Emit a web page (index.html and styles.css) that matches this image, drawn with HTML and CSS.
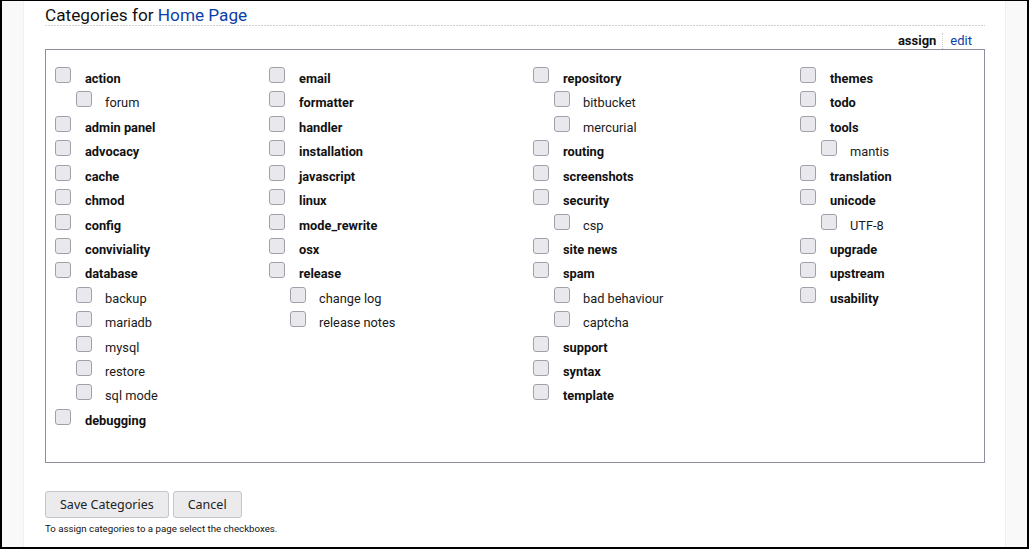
FILE: index.html
```html
<!DOCTYPE html>
<html>
<head>
<meta charset="utf-8">
<link rel="stylesheet" href="styles.css">
</head>
<body>
<div class="frame">
  <div class="side side-left"></div>
  <main class="main">
    <h1 class="title">Categories for <a href="#">Home Page</a></h1>
    <div class="tabs"><span class="tab-active">assign</span><a class="tab-link" href="#">edit</a></div>
    <div class="box">
      <div class="col">
        <div class="row top"><input type="checkbox"><span>action</span></div>
        <div class="row sub"><input type="checkbox"><span>forum</span></div>
        <div class="row top"><input type="checkbox"><span>admin panel</span></div>
        <div class="row top"><input type="checkbox"><span>advocacy</span></div>
        <div class="row top"><input type="checkbox"><span>cache</span></div>
        <div class="row top"><input type="checkbox"><span>chmod</span></div>
        <div class="row top"><input type="checkbox"><span>config</span></div>
        <div class="row top"><input type="checkbox"><span>conviviality</span></div>
        <div class="row top"><input type="checkbox"><span>database</span></div>
        <div class="row sub"><input type="checkbox"><span>backup</span></div>
        <div class="row sub"><input type="checkbox"><span>mariadb</span></div>
        <div class="row sub"><input type="checkbox"><span>mysql</span></div>
        <div class="row sub"><input type="checkbox"><span>restore</span></div>
        <div class="row sub"><input type="checkbox"><span>sql mode</span></div>
        <div class="row top"><input type="checkbox"><span>debugging</span></div>
      </div>
      <div class="col">
        <div class="row top"><input type="checkbox"><span>email</span></div>
        <div class="row top"><input type="checkbox"><span>formatter</span></div>
        <div class="row top"><input type="checkbox"><span>handler</span></div>
        <div class="row top"><input type="checkbox"><span>installation</span></div>
        <div class="row top"><input type="checkbox"><span>javascript</span></div>
        <div class="row top"><input type="checkbox"><span>linux</span></div>
        <div class="row top"><input type="checkbox"><span>mode_rewrite</span></div>
        <div class="row top"><input type="checkbox"><span>osx</span></div>
        <div class="row top"><input type="checkbox"><span>release</span></div>
        <div class="row sub"><input type="checkbox"><span>change log</span></div>
        <div class="row sub"><input type="checkbox"><span>release notes</span></div>
      </div>
      <div class="col">
        <div class="row top"><input type="checkbox"><span>repository</span></div>
        <div class="row sub"><input type="checkbox"><span>bitbucket</span></div>
        <div class="row sub"><input type="checkbox"><span>mercurial</span></div>
        <div class="row top"><input type="checkbox"><span>routing</span></div>
        <div class="row top"><input type="checkbox"><span>screenshots</span></div>
        <div class="row top"><input type="checkbox"><span>security</span></div>
        <div class="row sub"><input type="checkbox"><span>csp</span></div>
        <div class="row top"><input type="checkbox"><span>site news</span></div>
        <div class="row top"><input type="checkbox"><span>spam</span></div>
        <div class="row sub"><input type="checkbox"><span>bad behaviour</span></div>
        <div class="row sub"><input type="checkbox"><span>captcha</span></div>
        <div class="row top"><input type="checkbox"><span>support</span></div>
        <div class="row top"><input type="checkbox"><span>syntax</span></div>
        <div class="row top"><input type="checkbox"><span>template</span></div>
      </div>
      <div class="col">
        <div class="row top"><input type="checkbox"><span>themes</span></div>
        <div class="row top"><input type="checkbox"><span>todo</span></div>
        <div class="row top"><input type="checkbox"><span>tools</span></div>
        <div class="row sub"><input type="checkbox"><span>mantis</span></div>
        <div class="row top"><input type="checkbox"><span>translation</span></div>
        <div class="row top"><input type="checkbox"><span>unicode</span></div>
        <div class="row sub"><input type="checkbox"><span>UTF-8</span></div>
        <div class="row top"><input type="checkbox"><span>upgrade</span></div>
        <div class="row top"><input type="checkbox"><span>upstream</span></div>
        <div class="row top"><input type="checkbox"><span>usability</span></div>
      </div>
    </div>
    <div class="actions">
      <button class="btn" type="button">Save Categories</button>
      <button class="btn" type="button">Cancel</button>
    </div>
    <p class="help">To assign categories to a page select the checkboxes.</p>
  </main>
  <div class="side side-right"></div>
</div>
</body>
</html>
```
FILE: styles.css
```css
html, body {
  margin: 0;
  padding: 0;
  background: #fff;
}
body {
  font-family: Roboto, "Liberation Sans", sans-serif;
  color: #111;
}
.frame {
  box-sizing: border-box;
  width: 1029px;
  height: 549px;
  border: 2px solid #000;
  border-top-width: 1px;
  display: flex;
  overflow: hidden;
}
.side {
  width: 22px;
  flex: none;
  background: #f9f9f9;
}
.side-left {
  box-shadow: inset -1px 0 0 #f0f0f0;
}
.side-right {
  box-shadow: inset 1px 0 0 #f0f0f0;
}
.main {
  flex: 1;
  padding: 4px 20px 0 21px;
  min-width: 0;
}
.title {
  margin: 0;
  font-size: 17.2px;
  font-weight: 400;
  line-height: 20px;
  color: #111;
  padding-bottom: 1px;
  background-image: linear-gradient(to right, #cfcfcf 2px, transparent 2px);
  background-size: 3px 1px;
  background-repeat: repeat-x;
  background-position: left bottom;
}
.title a,
.tab-link {
  color: #0b3ea8;
  text-decoration: none;
}
.tabs {
  margin-top: 7px;
  height: 16px;
  line-height: 16px;
  font-size: 13px;
  display: flex;
  justify-content: flex-end;
  padding-right: 13px;
}
.tab-active {
  font-weight: 700;
  color: #111;
}
.tab-link {
  margin-left: 6px;
  padding-left: 7px;
  border-left: 1px dotted #c8c8c8;
}
.box {
  box-sizing: border-box;
  height: 414px;
  border: 1px solid #8f8c9f;
  padding: 17px 0 0 9px;
  display: grid;
  grid-template-columns: 214px 264px 267px 1fr;
  align-items: start;
}
.row {
  height: 24.43px;
  line-height: 24.43px;
  font-size: 12.8px;
  white-space: nowrap;
}
.row.top {
  font-weight: 700;
  color: #111;
}
.row.sub {
  padding-left: 21px;
  color: #1a1a1a;
}
.row.sub span {
  margin-left: -1px;
}
.row input {
  -webkit-appearance: none;
  appearance: none;
  box-sizing: border-box;
  width: 16px;
  height: 16px;
  margin: 0 14px 0 0;
  vertical-align: baseline;
  border: 1px solid #a0a0aa;
  border-radius: 3px;
  background: #e9e9ed;
}
.actions {
  margin-top: 28px;
  display: flex;
  gap: 4px;
}
.btn {
  box-sizing: border-box;
  height: 27px;
  padding: 0 14px;
  font-family: "Noto Sans", "Open Sans", sans-serif;
  font-size: 12.5px;
  color: #222;
  background: #ebebee;
  border: 1px solid #c4c4cc;
  border-radius: 3px;
}
.help {
  margin: 5px 0 0;
  font-size: 9.7px;
  line-height: 12px;
  color: #111;
}
```
